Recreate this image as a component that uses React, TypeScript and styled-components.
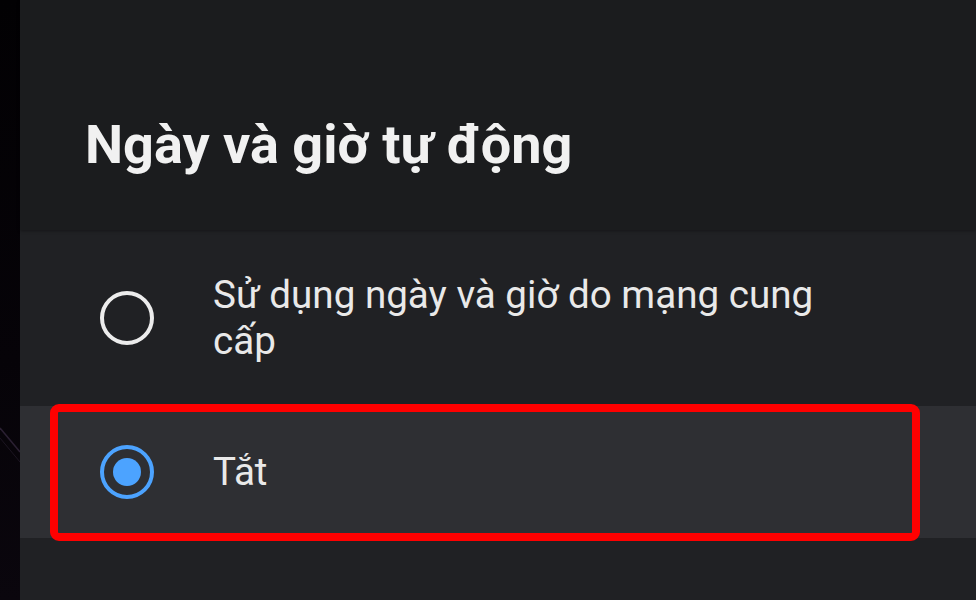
import React from "react";
import styled, { createGlobalStyle } from "styled-components";

const Global = createGlobalStyle`
  html, body { margin: 0; padding: 0; background: #030204; }
  body { font-family: Roboto, "Noto Sans", "Liberation Sans", sans-serif; }
`;

const Screen = styled.div`
  display: flex;
  width: 976px;
  height: 600px;
  overflow: hidden;
`;

const Wallpaper = styled.div`
  position: relative;
  width: 20px;
  flex: none;
  background: linear-gradient(180deg, #020103 0%, #060308 60%, #0a060d 100%);
`;

const WallpaperArt = styled.svg`
  position: absolute;
  left: 0;
  top: 0;
`;

const Panel = styled.div`
  flex: 1;
  display: flex;
  flex-direction: column;
  background: #202124;
`;

const Header = styled.div`
  height: 230px;
  flex: none;
  background: #1b1c1e;
  box-shadow: 0 1px 3px rgba(0, 0, 0, 0.35);
  display: flex;
  align-items: flex-start;
  padding: 112px 0 0 65px;
  box-sizing: border-box;
  position: relative;
  z-index: 1;
`;

const Title = styled.h1`
  margin: 0;
  font-size: 54px;
  font-weight: 700;
  line-height: 66px;
  color: #f1f1f1;
  white-space: nowrap;
`;

const List = styled.div`
  display: flex;
  flex-direction: column;
`;

const Row = styled.div<{ $selected?: boolean }>`
  position: relative;
  display: flex;
  align-items: center;
  gap: 59px;
  padding: 42px 40px 42px 80px;
  background: ${(p) => (p.$selected ? "#2e2f33" : "transparent")};
`;

const Radio = styled.span<{ $checked?: boolean }>`
  flex: none;
  width: 54px;
  height: 54px;
  margin: -3px 0;
  box-sizing: border-box;
  border-radius: 50%;
  border: 4px solid ${(p) => (p.$checked ? "#4ca3ff" : "#ececec")};
  display: flex;
  align-items: center;
  justify-content: center;
  &::after {
    content: "";
    display: ${(p) => (p.$checked ? "block" : "none")};
    width: 28px;
    height: 28px;
    border-radius: 50%;
    background: #4ca3ff;
  }
`;

const Label = styled.span`
  max-width: 640px;
  font-size: 38.6px;
  line-height: 46px;
  color: #e9e9e9;
`;

const Highlight = styled.div`
  position: absolute;
  left: 30px;
  top: -2px;
  width: 870px;
  height: 137px;
  box-sizing: border-box;
  border: 8px solid #ff0000;
  border-radius: 9px;
  pointer-events: none;
`;

export default function App() {
  return (
    <>
      <Global />
      <Screen>
        <Wallpaper>
          <WallpaperArt width="20" height="600" viewBox="0 0 20 600">
            <line x1="0" y1="428" x2="20" y2="452" stroke="#3a2c44" strokeWidth="1.5" opacity="0.7" />
            <line x1="0" y1="438" x2="20" y2="462" stroke="#2a2032" strokeWidth="1" opacity="0.6" />
          </WallpaperArt>
        </Wallpaper>
        <Panel>
          <Header>
            <Title>Ngày và giờ tự động</Title>
          </Header>
          <List>
            <Row>
              <Radio />
              <Label>Sử dụng ngày và giờ do mạng cung cấp</Label>
            </Row>
            <Row $selected>
              <Radio $checked />
              <Label>Tắt</Label>
              <Highlight />
            </Row>
          </List>
        </Panel>
      </Screen>
    </>
  );
}
